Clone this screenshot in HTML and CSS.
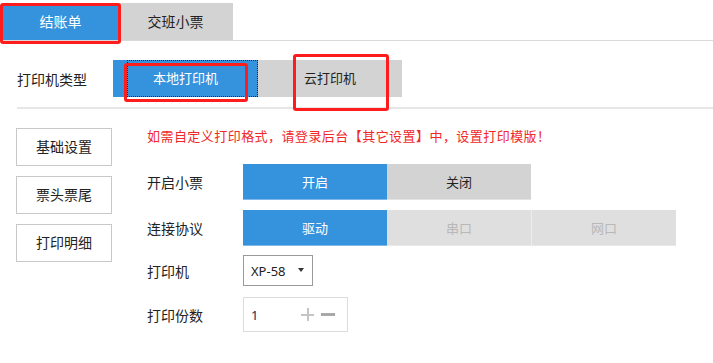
FILE: index.html
```html
<!DOCTYPE html>
<html lang="zh">
<head>
<meta charset="utf-8">
<link rel="stylesheet" href="styles.css">
</head>
<body>
<div class="page">
  <div class="tabs">
    <div class="tab active">结账单</div>
    <div class="tab">交班小票</div>
  </div>
  <div class="type-row">
    <div class="type-label">打印机类型</div>
    <div class="seg seg-focus">本地打印机</div>
    <div class="seg seg-off">云打印机</div>
  </div>
  <div class="main">
    <div class="side">
      <div class="side-btn">基础设置</div>
      <div class="side-btn">票头票尾</div>
      <div class="side-btn">打印明细</div>
    </div>
    <div class="content">
      <div class="notice">如需自定义打印格式，请登录后台【其它设置】中，设置打印模版！</div>
      <div class="row r1">
        <div class="label">开启小票</div>
        <div class="opt on">开启</div>
        <div class="opt off">关闭</div>
      </div>
      <div class="row r2">
        <div class="label">连接协议</div>
        <div class="opt on">驱动</div>
        <div class="opt dis">串口</div>
        <div class="opt dis">网口</div>
      </div>
      <div class="row r3">
        <div class="label">打印机</div>
        <div class="select"><span>XP-58</span><i class="caret"></i></div>
      </div>
      <div class="row r4">
        <div class="label">打印份数</div>
        <div class="num"><span class="val">1</span><i class="plus"></i><i class="minus"></i></div>
      </div>
    </div>
  </div>
  <div class="mark m1"></div>
  <div class="mark m2"></div>
  <div class="mark m3"></div>
</div>
</body>
</html>
```

FILE: styles.css
```css
html, body {
  margin: 0;
  padding: 0;
  background: #fff;
}
body {
  font-family: "Noto Sans", "Noto Sans CJK SC", sans-serif;
  color: #222;
  width: 713px;
  height: 363px;
  overflow: hidden;
}
.page {
  position: relative;
  width: 713px;
  height: 363px;
}
.tabs {
  display: flex;
  padding: 3px 0 0 3px;
  border-bottom: 1px solid #d9d9d9;
}
.tab {
  width: 115px;
  height: 37px;
  line-height: 37px;
  text-align: center;
  font-size: 14px;
  background: #d3d3d3;
  color: #222;
}
.tab.active {
  background: #3592dc;
  color: #fff;
}
.type-row {
  display: flex;
  align-items: center;
  margin-left: 17px;
  padding: 19px 0 10px;
  border-bottom: 2px solid #e6e6e6;
}
.type-label {
  width: 96px;
  font-size: 14px;
}
.seg {
  width: 145px;
  height: 37px;
  line-height: 37px;
  text-align: center;
  font-size: 13px;
}
.seg-focus {
  position: relative;
  background: #3592dc;
  color: #fff;
}
.seg-focus::after {
  content: "";
  position: absolute;
  left: 14px;
  top: 0;
  right: 0;
  bottom: 0;
  border: 1px dotted #223;
}
.seg-off {
  width: 144px;
  background: #d3d3d3;
  color: #222;
}
.main {
  display: flex;
  padding: 18px 0 0 16px;
}
.side {
  display: flex;
  flex-direction: column;
  gap: 10px;
  width: 96px;
  margin-top: 1px;
  margin-right: 35px;
}
.side-btn {
  height: 36px;
  line-height: 36px;
  border: 1px solid #c8c8c8;
  text-align: center;
  font-size: 14px;
}
.content {
  display: flex;
  flex-direction: column;
}
.notice {
  color: #f02828;
  font-size: 13px;
  line-height: 18px;
  letter-spacing: 0.45px;
}
.row {
  display: flex;
  align-items: center;
}
.r1 { margin-top: 19px; }
.r2 { margin-top: 10px; }
.r3 { margin-top: 9px; }
.r4 { margin-top: 11px; }
.label {
  width: 96px;
  font-size: 14px;
}
.opt {
  width: 144px;
  height: 36px;
  line-height: 36px;
  text-align: center;
  font-size: 13px;
  box-sizing: border-box;
}
.opt.on {
  background: #3592dc;
  color: #fff;
  border-bottom: 1px solid #7fb8e8;
}
.opt.off {
  background: #d3d3d3;
  color: #222;
  border-bottom: 1px solid #e4e4e4;
}
.opt.dis {
  background: #dfdfdf;
  color: #b8b8b8;
  border-bottom: 1px solid #e8e8e8;
}
.opt.dis + .opt.dis {
  width: 145px;
  border-left: 1px solid #ececec;
}
.select {
  display: flex;
  align-items: center;
  justify-content: space-between;
  box-sizing: border-box;
  width: 70px;
  height: 31px;
  padding: 0 8px 0 7px;
  border: 1px solid #9a9a9a;
  font-size: 13px;
  color: #222;
}
.caret {
  width: 0;
  height: 0;
  border-left: 3.5px solid transparent;
  border-right: 3.5px solid transparent;
  border-top: 4px solid #333;
  margin-top: -2px;
}
.num {
  display: flex;
  align-items: center;
  box-sizing: border-box;
  width: 105px;
  height: 35px;
  padding: 0 0 0 7px;
  border: 1px solid #dcdcdc;
  font-size: 13px;
  color: #1a2a55;
}
.val {
  flex: 1;
}
.plus {
  position: relative;
  width: 13px;
  height: 13px;
  margin-right: 7px;
}
.plus::before, .plus::after {
  content: "";
  position: absolute;
  background: #c4c4c4;
}
.plus::before {
  left: 0;
  right: 0;
  top: 6px;
  height: 2px;
}
.plus::after {
  top: 0;
  bottom: 0;
  left: 6px;
  width: 2px;
}
.minus {
  width: 14px;
  height: 3px;
  background: #a8a8a8;
  margin-right: 12px;
}
.mark {
  position: absolute;
  box-sizing: border-box;
  border: 3px solid #ff1c1c;
  border-radius: 3px;
}
.m1 { left: 0; top: 3px; width: 121px; height: 41px; }
.m2 { left: 124px; top: 63px; width: 124px; height: 39px; }
.m3 { left: 293px; top: 54px; width: 96px; height: 57px; }
```
